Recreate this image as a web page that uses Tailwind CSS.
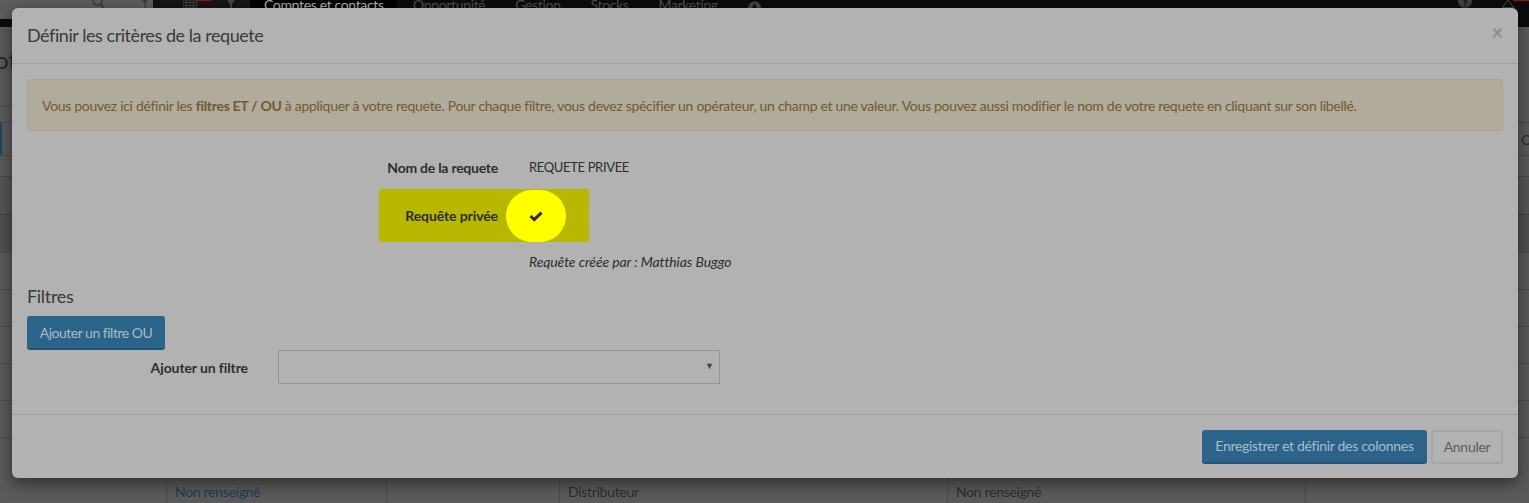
<!DOCTYPE html>
<html lang="fr">
<head>
    <meta charset="UTF-8">
    <title>Définir les critères de la requete</title>
    <script src="https://cdn.jsdelivr.net/npm/@tailwindcss/browser@4"></script>
</head>
<body class="relative h-[503px] w-[1529px] overflow-hidden bg-[#5a5a5a] font-['Lato','Liberation_Sans',sans-serif] text-[14px] text-[#2e2e2e]">
    <!-- page behind the modal -->
    <div class="flex h-[27px] bg-[#0c0c0c] text-[14px] leading-none tracking-[-0.35px]">
        <div class="flex h-[19px] w-[153px] items-start bg-[#5c5c5c] pl-[92px]">
            <svg class="h-[8px] w-[12px]" viewBox="0 0 12 8"><circle cx="5.5" cy="0.5" r="4.5" fill="none" stroke="#3a3a3a" stroke-width="1.6"/><path d="M8.5 4 L11.5 7.5" stroke="#3a3a3a" stroke-width="2"/></svg>
            <svg class="ml-[37px] h-[8px] w-[8px]" viewBox="0 0 8 8"><path d="M1 0 H7 L4.6 3 V8 H3.4 V3 Z" fill="#3a3a3a"/></svg>
        </div>
        <div class="flex h-[8px] w-[97px] items-start bg-[#151515] pl-[30px]">
            <svg class="h-[8px] w-[28px]" viewBox="0 0 28 8"><path d="M0 0 H14 V8 H0 Z M0 2.5 H14 M0 5.5 H14 M3.5 0 V8 M7 0 V8 M10.5 0 V8" fill="none" stroke="#3d3d3d"/><path d="M12 0.5 H28" stroke="#7a1a1a" stroke-width="1.4"/></svg>
            <svg class="ml-[16px] h-[8px] w-[8px]" viewBox="0 0 8 8"><path d="M0 0 H8 L5 4 V8 H3 V4 Z" fill="#444444"/></svg>
        </div>
        <div class="h-[8px] w-[147px] overflow-hidden bg-black pl-[14px] text-[#b0b0b0]"><span class="block -mt-[2px]">Comptes et contacts</span></div>
        <div class="flex h-[8px] gap-[30px] overflow-hidden pl-[16px] text-[#4f4f4f]">
            <span class="-mt-[2px]">Opportunité</span><span class="-mt-[2px]">Gestion</span><span class="-mt-[2px]">Stocks</span><span class="-mt-[2px]">Marketing</span>
        </div>
        <svg class="ml-[30px] h-[8px] w-[13px]" viewBox="0 0 13 8"><path d="M0 8 A6.5 6.5 0 1 1 13 8 L9 8 L6.5 3 L4 8 Z" fill="#444444"/></svg>
        <div class="ml-auto flex h-[8px] items-start">
            <svg class="h-[8px] w-[14px]" viewBox="0 0 14 8"><circle cx="7" cy="1" r="7" fill="#3f3f3f"/><path d="M5.5 0.5 A1.5 1.5 0 1 1 7 3 V4 M7 5.5 V7" fill="none" stroke="#111111" stroke-width="1.3"/></svg>
            <svg class="ml-[30px] h-[8px] w-[27px]" viewBox="0 0 27 8"><path d="M6 0 L11.5 7.5 H0.5 Z" fill="none" stroke="#3f3f3f" stroke-width="1.2"/><path d="M11 0.5 H27" stroke="#7a1a1a" stroke-width="1.4"/></svg>
        </div>
    </div>
    <div class="h-[95px] overflow-hidden pt-[18px] text-[24px] leading-[30px] text-[#242424]">
        <span class="block -ml-[5px]">ot</span>
        <div class="mt-[31px] w-[12px] border-t border-[#4a4a4a]"></div>
    </div>
    <div class="flex h-[33px] justify-between border-t border-[#4a4a4a]"><div class="w-[2px] bg-[#164a66]"></div><span class="-mr-[3px] w-[11px] pt-[6px] text-[#2a2a2a]">O</span></div>
    <div class="h-[21px] border-t border-[#4a4a4a]"></div>
    <div class="h-[38px] border-t border-[#4a4a4a] bg-[#555555]"></div>
    <div class="h-[38px] border-t border-[#404040] bg-[#505050]"></div>
    <div class="h-[37px] border-t border-[#4a4a4a]"></div>
    <div class="h-[37px] border-t border-[#4a4a4a]"></div>
    <div class="h-[37px] border-t border-[#4a4a4a]"></div>
    <div class="h-[37px] border-t border-[#4a4a4a]"></div>
    <div class="h-[37px] border-t border-[#4a4a4a]"></div>
    <div class="h-[37px] border-t border-[#4a4a4a]"></div>
    <div class="flex h-[29px] tracking-[-0.3px] text-[#2c2c2c]">
        <div class="w-[166px]"></div>
        <div class="w-[220px] border-l border-[#4a4a4a] pl-[8px] pt-[7px] text-[#1b3b52]">Non renseigné</div>
        <div class="w-[173px] border-l border-[#4a4a4a]"></div>
        <div class="w-[388px] border-l border-[#4a4a4a] pl-[8px] pt-[7px]">Distributeur</div>
        <div class="w-[358px] border-l border-[#4a4a4a] pl-[8px] pt-[7px]">Non renseigné</div>
        <div class="border-l border-[#4a4a4a]"></div>
    </div>

    <!-- modal -->
    <div class="absolute left-[12px] top-[8px] flex h-[470px] w-[1506px] flex-col rounded-[6px] bg-[#b2b2b2] shadow-[0_5px_15px_rgba(0,0,0,0.5)]">
        <div class="flex h-[56px] shrink-0 items-center justify-between border-b border-[#a0a0a0] px-[15px]">
            <h4 class="text-[18px] tracking-[-0.45px] text-[#3a3a3a]">Définir les critères de la requete</h4>
            <span class="-mt-[8px] text-[20px] font-bold leading-none text-[#8c8c8c]">×</span>
        </div>
        <div class="flex-1 px-[15px] pt-[15px]">
            <div class="flex h-[52px] items-center rounded-[4px] border border-[#aba48d] bg-[#b0ab9a] pl-[14px] pr-[15px] tracking-[-0.3px] text-[#6f5a35]">
                <p>Vous pouvez ici définir les <b>filtres ET / OU</b> à appliquer à votre requete. Pour chaque filtre, vous devez spécifier un opérateur, un champ et une valeur. Vous pouvez aussi modifier le nom de votre requete en cliquant sur son libellé.</p>
            </div>
            <div class="ml-[352px] mt-[23px] flex h-[26px] items-center">
                <label class="w-[119px] text-right font-bold tracking-[-0.25px]">Nom de la requete</label>
                <span class="ml-[31px] mt-[2px] text-[13px] tracking-[-0.35px]">REQUETE PRIVEE</span>
            </div>
            <div class="ml-[352px] mt-[9px] flex h-[53px] w-[210px] items-center bg-[#b8b800]">
                <label class="w-[119px] text-right font-bold tracking-[-0.1px]">Requête privée</label>
                <div class="ml-[8px] flex h-[52px] w-[60px] items-center justify-center rounded-full bg-[#ffff00]">
                    <svg class="h-[14px] w-[14px]" viewBox="0 0 14 14"><path d="M1.5 7 L5.2 10.6 L12.5 3.6" fill="none" stroke="#2e2e2e" stroke-width="3"/></svg>
                </div>
            </div>
            <p class="ml-[502px] mt-[9px] italic tracking-[-0.1px]">Requête créée par : Matthias Buggo</p>
            <h4 class="mt-[11px] text-[18px] tracking-[-0.3px] text-[#3a3a3a]">Filtres</h4>
            <button class="mt-[6px] block h-[34px] w-[138px] rounded-[3px] border-b-2 border-[#245571] bg-[#2b6488] tracking-[-0.5px] text-[#a9bcc8]">Ajouter un filtre OU</button>
            <div class="flex h-[34px] items-center">
                <label class="w-[221px] text-right font-bold tracking-[-0.1px]">Ajouter un filtre</label>
                <div class="ml-[30px] flex h-[34px] w-[442px] items-center justify-end border border-[#949494] pr-[5px] pb-[2px] text-[9px] text-[#444444]">▼</div>
            </div>
        </div>
        <div class="flex h-[64px] shrink-0 items-center justify-end gap-[4px] border-t border-[#a0a0a0] px-[15px]">
            <button class="h-[34px] w-[225px] rounded-[3px] border-b-2 border-[#245571] bg-[#2b6488] tracking-[-0.3px] text-[#a9bcc8]">Enregistrer et définir des colonnes</button>
            <button class="h-[34px] w-[72px] rounded-[3px] border-2 border-[#a5a5a5] tracking-[-0.3px] text-[#5c5c5c]">Annuler</button>
        </div>
    </div>
</body>
</html>
